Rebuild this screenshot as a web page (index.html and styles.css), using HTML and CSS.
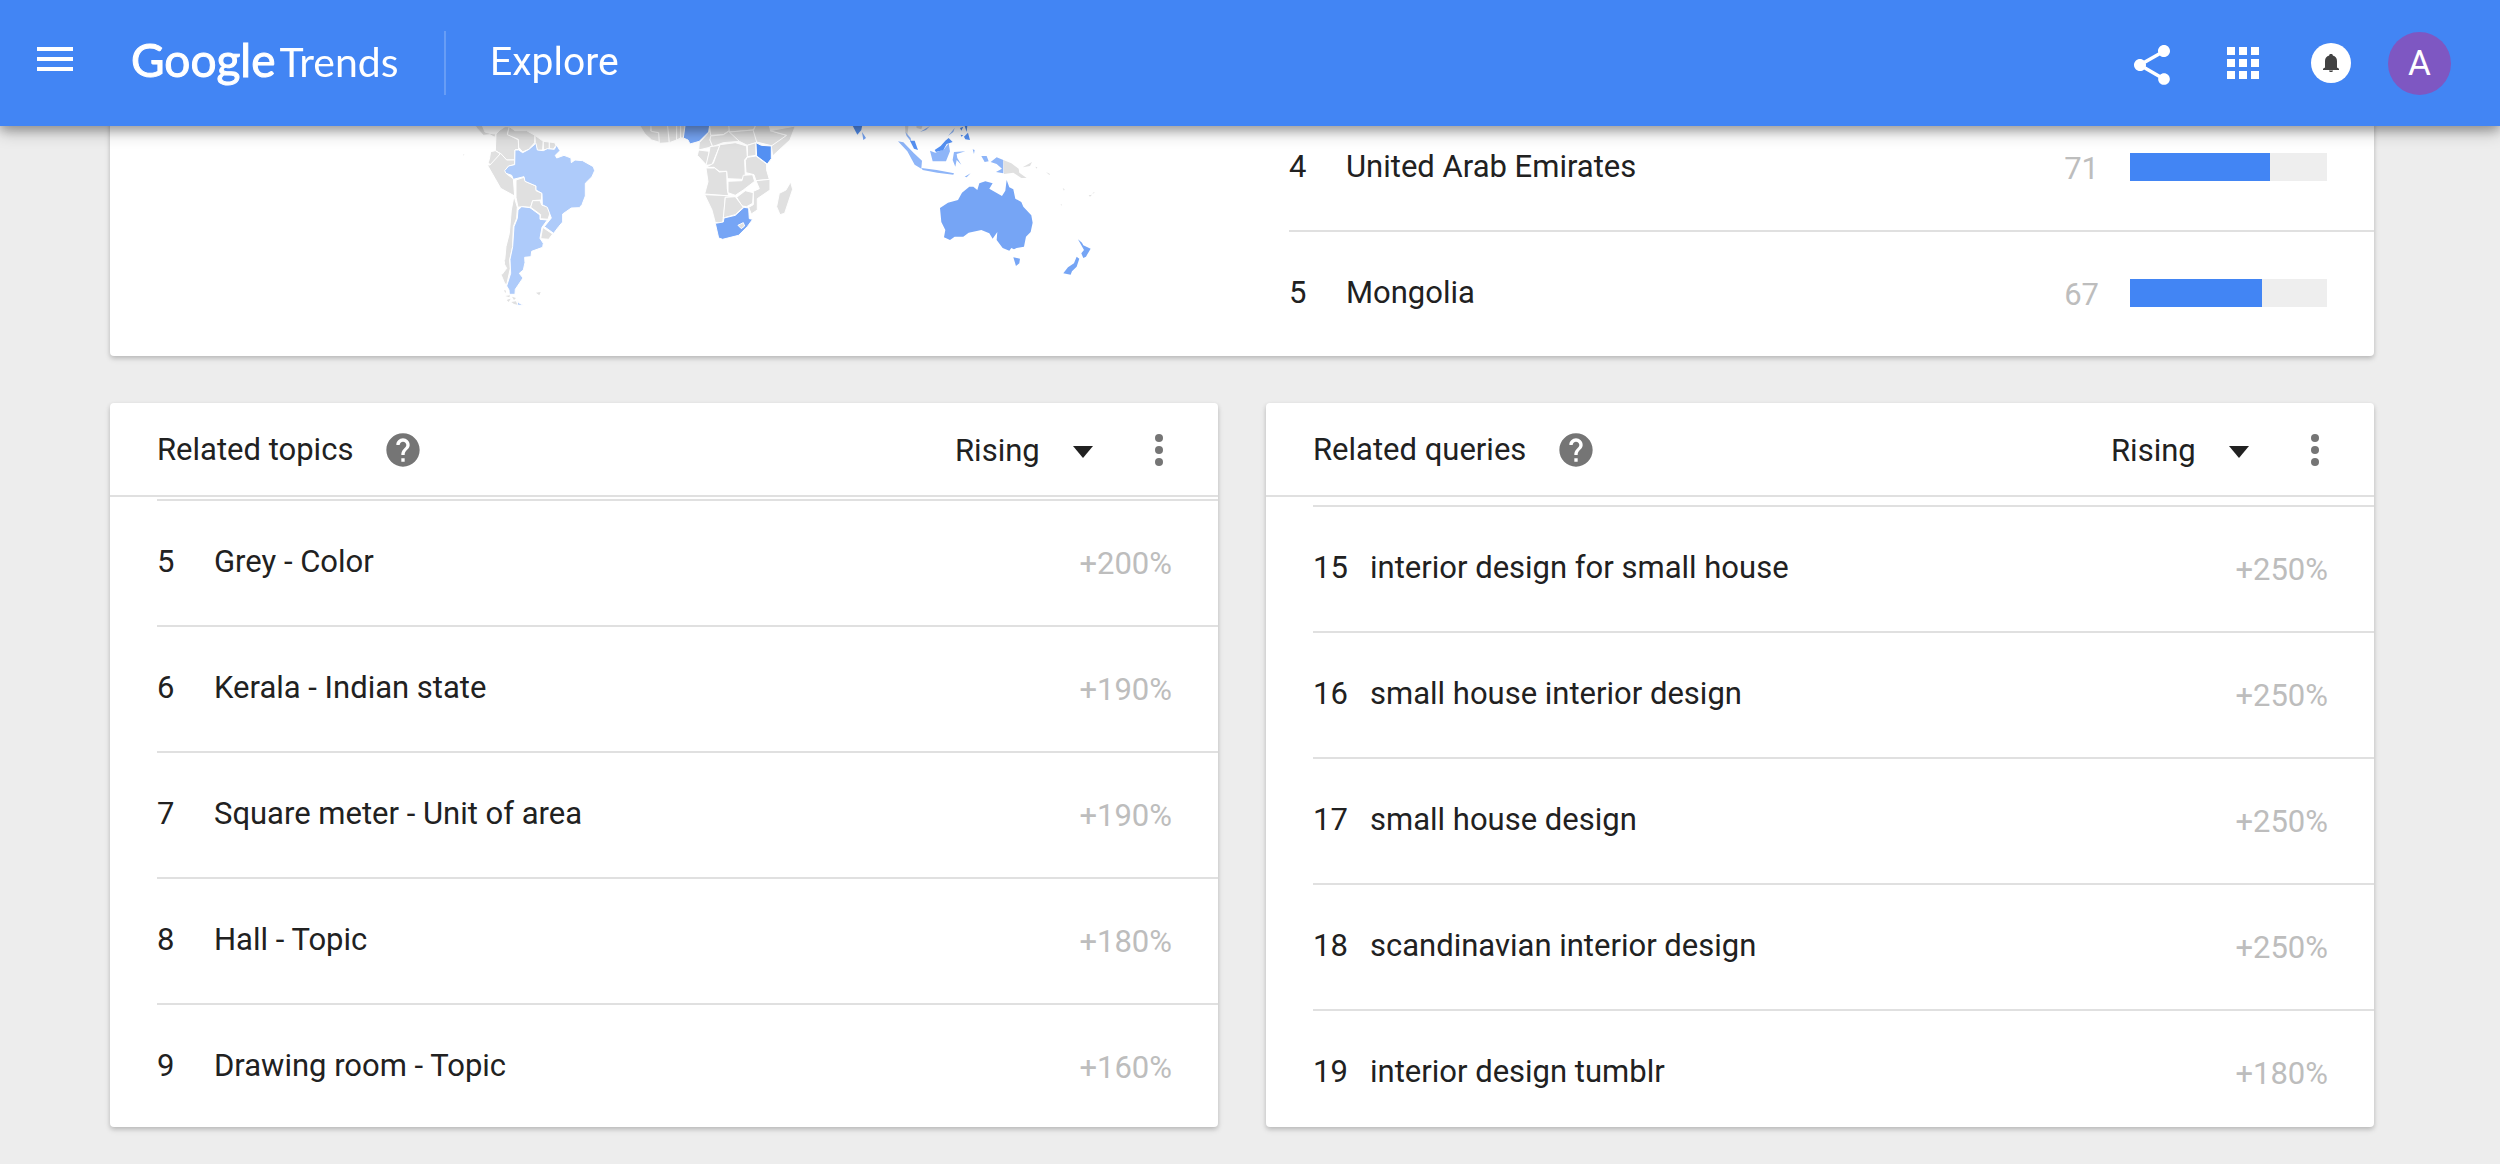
FILE: index.html
```html
<!DOCTYPE html>
<html lang="en">
<head>
<meta charset="utf-8">
<title>Google Trends - Explore</title>
<link rel="stylesheet" href="styles.css">
</head>
<body>
<header class="topbar">
  <button class="icon-button menu-button" aria-label="Main menu"><svg class="icon" viewBox="0 0 24 24"><path d="M3 18h18v-2H3v2zm0-5h18v-2H3v2zm0-7v2h18V6H3z"/></svg></button>
  <a class="logo" href="#"><span class="logo-google">Google</span><span class="logo-trends">Trends</span></a>
  <h1 class="page-name">Explore</h1>
  <nav class="actions">
    <button class="icon-button share-button" aria-label="Share"><svg class="icon" viewBox="0 0 24 24"><path d="M18 16.08c-.76 0-1.44.3-1.96.77L8.91 12.7c.05-.23.09-.46.09-.7s-.04-.47-.09-.7l7.05-4.11c.54.5 1.25.81 2.04.81 1.66 0 3-1.34 3-3s-1.34-3-3-3-3 1.34-3 3c0 .24.04.47.09.7L8.04 9.81C7.5 9.31 6.79 9 6 9c-1.66 0-3 1.34-3 3s1.34 3 3 3c.79 0 1.5-.31 2.04-.81l7.12 4.16c-.05.21-.08.43-.08.65 0 1.61 1.31 2.92 2.92 2.92s2.92-1.31 2.92-2.92-1.31-2.92-2.92-2.92z"/></svg></button>
    <button class="icon-button" aria-label="Google apps"><svg class="icon" viewBox="0 0 24 24"><path d="M4 8h4V4H4v4zm6 12h4v-4h-4v4zm-6 0h4v-4H4v4zm0-6h4v-4H4v4zm6 0h4v-4h-4v4zm6-10v4h4V4h-4zm-6 4h4V4h-4v4zm6 6h4v-4h-4v4zm0 6h4v-4h-4v4z"/></svg></button>
    <button class="icon-button bell-button" aria-label="Notifications"><svg class="bell" viewBox="0 0 24 24"><path d="M12 21c1.100 0 2-.7 2-1.600h-4c0 .9.900 1.600 2 1.600zm6-4.500V10c0-2.900-1.500-5-4.200-5.600V4.300c0-.8-.8-1.300-1.800-1.300s-1.800.5-1.800 1.300v.1C7.500 5 6 7.100 6 10v6.500l-2 1.200V19h16v-1.300z"/></svg></button>
    <button class="avatar" aria-label="Account">A</button>
  </nav>
</header>

<main class="content">
  <section class="card region">
    <svg class="map" viewBox="110 106 1132 250" role="img" aria-label="Interest by region">
      <g class="land" transform="translate(460 110) scale(.3333)">
        <path d="M40 40H64L75 66 90 70 108 72 104 82 90 74 70 76 52 56Z"/>
        <path d="M108 72L120 60 135 50 148 50 142 72 175 90 176 118 165 120 164 150 140 150 120 130 106 122Z"/>
        <path d="M148 50L165 62H200L225 76 224 98 206 118 188 126 176 112 175 88 142 74Z"/>
        <path d="M225 76L250 94 248 120 232 122 226 98Z"/>
        <path d="M250 94L268 96 268 116 250 120Z"/><path d="M268 96L284 98 288 106 280 118 268 116Z"/>
        <path d="M92 125L106 122 122 132 95 165 84 160 88 148Z"/>
        <path d="M82 165L90 165 122 130 140 150H164V164L146 168 136 180 140 192 160 206 164 258 122 235 105 205Z"/>
        <path d="M168 210L192 202 196 214 228 228V242L246 250 244 270 218 272 212 292 185 290 174 292 168 262Z"/>
        <path d="M218 272L240 272 246 286 262 290 270 310 264 328 240 326 242 314 212 292Z"/>
        <path d="M248 352L278 372 266 388 242 386Z"/>
        <path d="M162 258L172 292 170 325 160 350 158 410 149 450 151 475 140 525 134 520 124 496 140 475 133 462 138 410 148 370 154 300Z"/>
        <path class="l1" d="M165 120L176 120 188 128 207 118 228 100 232 120 250 122 262 116 283 118 290 105 300 122 286 136 290 144 312 136 333 144 334 158 345 150 368 152 400 170 404 182 396 200 376 220 376 258 366 284 358 293 334 294 308 312V336L296 350 281 370 253 350 274 324 262 292 247 284 246 250 228 240V228L195 214 192 200 160 208 155 196 138 190 134 182 146 168 164 164Z"/>
        <path class="l1" d="M174 300L185 290 210 293 240 315V328L262 330 246 352 240 385 250 400 248 412 215 424 213 440 194 442 195 458 190 480 178 490 189 504 166 538 165 553H148L147 540 140 528 152 490 150 448 158 410 162 350 172 325Z"/>
        <path class="l1" d="M172 568L176 578 190 586H173Z"/>
        <path class="isle" d="M134 450L140 448 136 466ZM124 494L134 492 136 502ZM132 540L138 542 136 550ZM136 558L150 556 148 562ZM140 570L152 566 146 576ZM156 560L168 564 162 570ZM154 576L168 574 172 584 162 582ZM228 548L242 546 238 556ZM10 132L13 134 11 137Z"/>
        <path d="M535 40H576L572 62 596 66 602 98 575 90 555 72Z"/>
        <path d="M572 40H622L628 68V98L598 100 596 68 574 64Z"/>
        <path d="M622 40H650V90L628 98Z"/><path d="M650 40H662V84L650 90Z"/><path d="M662 40H676L672 84 662 84Z"/>
        <path d="M748 62L756 76 750 90 758 110 716 120 718 98 740 74Z"/>
        <path d="M748 40H806L810 60 790 74 752 76Z"/>
        <path d="M752 78L790 74 810 62 838 94 790 98 758 110 750 90Z"/>
        <path d="M806 40H890L880 60 808 66Z"/>
        <path d="M808 66L880 60 895 96 862 106 838 94Z"/>
        <path d="M890 40H926L932 62 980 76 938 108 890 96 880 62Z"/>
        <path d="M930 62L1006 48 990 90 938 138 934 108 980 76Z"/>
        <path d="M862 106L888 98V136L862 140Z"/>
        <path d="M716 120L748 124 740 166 712 136Z"/><path d="M750 110L780 106 756 164 738 166 748 124Z"/>
        <path d="M780 104L826 98 860 108 862 140 854 150 856 196 846 208 802 206 800 184 778 184 762 172H738L760 160Z"/>
        <path d="M862 142L888 138 920 162V180L928 208 888 212 882 194 858 188 856 152Z"/>
        <path d="M738 174H764L778 186 800 184 802 236 806 258 734 252 744 215Z"/>
        <path d="M804 214L846 212 850 196 878 194 884 214 850 240 826 256 804 248Z"/>
        <path d="M888 212L930 208V240L892 266V300L874 312 866 292 880 284V244L898 236Z"/>
        <path d="M830 262L856 242 880 248 878 280 860 290 846 288Z"/>
        <path d="M734 254L826 258 796 262 792 310 788 338 766 338 756 300Z"/>
        <path d="M796 262L826 260 850 292 826 314 790 324Z"/>
        <path d="M992 216L998 238 974 310 960 314 950 290 958 250 978 240Z"/>
        <path class="l3" d="M676 40H750L746 66 718 94 690 102 684 90 670 84Z"/>
        <path class="l4" d="M888 98L904 106 934 108V146L922 162 890 138Z"/>
        <path class="l3" d="M766 340L790 336 792 324 826 316 852 292 866 294 868 326 878 328 862 350 836 376 788 388 776 384Z"/>
        <path d="M834 346L850 338 854 348 844 356Z"/>
      </g>
      <g class="land coast" transform="translate(820 110) scale(.3333)">
        <path class="l4" d="M94 40H128L124 60 112 74Z"/><path class="l3" d="M126 66L138 84 130 90Z"/>
        <path class="isle" d="M255 40H266L262 80 256 66ZM288 40H310L304 58 290 54Z"/>
        <path class="l2" d="M300 66L330 48 318 60ZM256 66L272 84 274 96 260 78Z"/>
        <path class="l4" d="M270 92L284 92 294 120 282 116Z"/>
        <path class="l2" d="M234 94L250 97 282 130 306 152 304 176 284 164 262 124Z"/>
        <path class="l2" d="M304 174L350 180 402 190 400 194 352 188 308 180Z"/>
        <path class="l2" d="M330 122L346 128 372 118 386 100 390 124 378 154H338Z"/>
        <path class="l4" d="M344 120L362 108 376 92 386 84 398 96 380 102 370 120 348 126Z"/>
        <path class="l2" d="M384 78L404 54 400 66ZM402 126L436 124 410 132 412 144 424 164 410 150 406 170 398 150ZM458 118L464 120 462 132ZM484 138H500L506 154 494 156ZM434 200L452 190 440 202ZM404 196L420 202ZM468 150L476 156Z"/>
        <path class="l4" d="M432 80L444 68 450 90 436 88ZM420 54L430 50 424 62ZM434 48H442L440 66ZM422 74L430 76 424 80Z"/>
        <path class="l2" d="M512 156L530 142 550 150V190L528 186 546 176 530 162Z"/>
        <path d="M550 150L574 160 596 176 598 188 620 204 604 204 580 188 552 192ZM608 172L636 156 630 168Z"/>
        <path class="isle" d="M646 170L652 172 650 176ZM678 186L690 192 688 195ZM728 234L734 238 732 242ZM722 282L726 284 724 287ZM806 256L816 254 810 260ZM816 250L824 246 822 250Z"/>
        <path class="l3" d="M360 294L384 278 414 270 426 248 448 230 460 230 472 240 478 220 496 214 518 220 508 236 546 258 556 242 560 210 568 232 580 238 586 266 604 276 610 290 634 316 638 338 632 366 618 380 612 410 590 414 582 418 574 414 568 422 548 414 530 390 532 366 518 386 508 370 484 360 446 368 430 380H404L390 390 372 382 376 360 364 336Z"/>
        <path class="l3" d="M580 442L600 446 598 460 588 468ZM480 212L494 214ZM774 388L786 398 790 406 812 416 798 440 790 444 784 430 792 420ZM770 440L778 446 770 470 756 484 752 494 730 490 744 472 762 460ZM736 498L742 498Z"/>
      </g>
    </svg>
    <ol class="rows region-rows">
      <li class="row"><span class="rank">4</span><span class="name">United Arab Emirates</span><span class="value">71</span><span class="bar"><span class="fill" style="width:71%"></span></span></li>
      <li class="row"><span class="rank">5</span><span class="name">Mongolia</span><span class="value">67</span><span class="bar"><span class="fill" style="width:67%"></span></span></li>
    </ol>
  </section>

  <div class="pair">
    <section class="card">
      <header class="card-head">
        <h2 class="card-title">Related topics</h2>
        <button class="help" aria-label="Help: related topics"><svg viewBox="0 0 24 24"><path d="M12 2C6.480 2 2 6.480 2 12s4.480 10 10 10 10-4.480 10-10S17.520 2 12 2zm1 17h-2v-2h2v2zm2.070-7.750l-.9.920C13.450 12.900 13 13.500 13 15h-2v-.5c0-1.100.45-2.100 1.170-2.830l1.240-1.260c.37-.36.590-.86.590-1.410 0-1.100-.9-2-2-2s-2 .9-2 2H8c0-2.210 1.790-4 4-4s4 1.790 4 4c0 .88-.36 1.680-.93 2.250z"/></svg></button>
        <div class="picker"><select class="select" aria-label="Sort related topics"><option>Rising</option><option>Top</option></select></div>
        <button class="icon-button more" aria-label="More options"><svg class="icon" viewBox="0 0 24 24"><circle cx="12" cy="6" r="2"/><circle cx="12" cy="12" r="2"/><circle cx="12" cy="18" r="2"/></svg></button>
      </header>
      <div class="scroller">
        <ol class="rows topics">
          <li class="row"><span class="rank">5</span><span class="name">Grey - Color</span><span class="value">+200%</span></li>
          <li class="row"><span class="rank">6</span><span class="name">Kerala - Indian state</span><span class="value">+190%</span></li>
          <li class="row"><span class="rank">7</span><span class="name">Square meter - Unit of area</span><span class="value">+190%</span></li>
          <li class="row"><span class="rank">8</span><span class="name">Hall - Topic</span><span class="value">+180%</span></li>
          <li class="row"><span class="rank">9</span><span class="name">Drawing room - Topic</span><span class="value">+160%</span></li>
        </ol>
      </div>
    </section>
    <section class="card">
      <header class="card-head">
        <h2 class="card-title">Related queries</h2>
        <button class="help" aria-label="Help: related queries"><svg viewBox="0 0 24 24"><path d="M12 2C6.480 2 2 6.480 2 12s4.480 10 10 10 10-4.480 10-10S17.520 2 12 2zm1 17h-2v-2h2v2zm2.070-7.750l-.9.920C13.450 12.900 13 13.500 13 15h-2v-.5c0-1.100.45-2.100 1.170-2.830l1.240-1.260c.37-.36.590-.86.590-1.410 0-1.100-.9-2-2-2s-2 .9-2 2H8c0-2.210 1.790-4 4-4s4 1.790 4 4c0 .88-.36 1.680-.93 2.250z"/></svg></button>
        <div class="picker"><select class="select" aria-label="Sort related queries"><option>Rising</option><option>Top</option></select></div>
        <button class="icon-button more" aria-label="More options"><svg class="icon" viewBox="0 0 24 24"><circle cx="12" cy="6" r="2"/><circle cx="12" cy="12" r="2"/><circle cx="12" cy="18" r="2"/></svg></button>
      </header>
      <div class="scroller">
        <ol class="rows queries">
          <li class="row"><span class="rank">15</span><span class="name">interior design for small house</span><span class="value">+250%</span></li>
          <li class="row"><span class="rank">16</span><span class="name">small house interior design</span><span class="value">+250%</span></li>
          <li class="row"><span class="rank">17</span><span class="name">small house design</span><span class="value">+250%</span></li>
          <li class="row"><span class="rank">18</span><span class="name">scandinavian interior design</span><span class="value">+250%</span></li>
          <li class="row"><span class="rank">19</span><span class="name">interior design tumblr</span><span class="value">+180%</span></li>
        </ol>
      </div>
    </section>
  </div>
</main>
</body>
</html>
```

FILE: styles.css
```css
* { box-sizing: border-box; }

body {
  margin: 0;
  padding-top: 106px;
  background: #ededed;
  color: #212121;
  font: 400 31px/40px Roboto, "Liberation Sans", sans-serif;
}

button, select {
  margin: 0;
  padding: 0;
  border: 0;
  background: none;
  color: inherit;
  font: inherit;
}

/* Fixed top bar: the page scrolls underneath it */
.topbar {
  position: fixed;
  z-index: 2;
  top: 0;
  left: 0;
  right: 0;
  height: 126px;
  padding: 0 49px 0 31px;
  display: flex;
  align-items: center;
  background: #4285f4;
  color: #fff;
  box-shadow: 0 4px 10px rgba(0, 0, 0, .24), 0 6px 16px rgba(0, 0, 0, .24);
}

.icon-button { display: flex; width: 48px; height: 48px; }
.icon { width: 48px; height: 48px; fill: currentColor; }
.menu-button { margin-bottom: 8px; }

.logo {
  display: flex;
  align-items: baseline;
  gap: 4px;
  width: 313px;
  margin-left: 52px;
  padding-bottom: 4px;
  color: #fff;
  font-family: Lato, sans-serif;
  line-height: 64px;
  text-decoration: none;
}
.logo-google { font-size: 46px; -webkit-text-stroke: 1px #fff; }
.logo-trends { font-size: 41px; }

.page-name {
  display: flex;
  align-items: center;
  height: 64px;
  margin: 0;
  padding: 0 0 2px 44px;
  border-left: 2px solid rgba(255, 255, 255, .2);
  font-size: 39px;
  font-weight: 400;
}

.actions { display: flex; align-items: center; margin-left: auto; }
.share-button { margin: 4px 43px 0 0; }
.bell-button {
  width: 40px;
  height: 40px;
  margin: 0 37px 0 44px;
  align-items: center;
  justify-content: center;
  border-radius: 50%;
  background: #fff;
}
.bell { width: 24px; height: 24px; fill: #424242; }
.avatar {
  width: 63px;
  height: 63px;
  border-radius: 50%;
  background: #7e57c2;
  font-size: 35px;
  line-height: 63px;
}

.content { padding: 0 126px 36px 110px; }

.card {
  overflow: hidden;
  border-radius: 4px;
  background: #fff;
  box-shadow: 0 2px 4px rgba(0, 0, 0, .14), 0 3px 6px rgba(0, 0, 0, .1);
}

.region { display: grid; grid-template-columns: 1fr 1fr; }
.map { display: block; width: 100%; }
.land path { fill: #e0e0e0; stroke: #fff; stroke-width: 3; stroke-linejoin: round; }
.coast path { stroke-width: 0; }
.land .isle { stroke: none; }
.land .l1 { fill: #aecbfa; }
.land .l2 { fill: #8eb5f8; }
.land .l3 { fill: #76a5f5; }
.land .l4 { fill: #5490f2; }

.rows { margin: 0; padding: 0 0 0 47px; list-style: none; }
.row {
  display: flex;
  align-items: center;
  height: 126px;
  padding: 0 46px 3px 0;
  border-top: 2px solid #e0e0e0;
}
.rank { width: 57px; }
.name { flex: 1; }
.value { padding-top: 4px; color: #bdbdbd; }

.region-rows .row { height: 124px; border-top: 0; padding-right: 47px; }
.region-rows .row + .row { height: 126px; border-top: 2px solid #e0e0e0; }
.bar { width: 197px; height: 28px; margin-left: 31px; background: #eee; }
.fill { display: block; height: 100%; background: #4285f4; }

.pair {
  display: grid;
  grid-template-columns: 1fr 1fr;
  gap: 48px;
  margin-top: 47px;
}

.card-head {
  display: flex;
  align-items: center;
  height: 94px;
  padding: 2px 35px 0 47px;
  border-bottom: 2px solid #e0e0e0;
}
.card-title { margin: 0; font-size: 31px; font-weight: 400; }
.help { width: 40px; height: 40px; margin-left: 30px; }
.help svg { display: block; width: 40px; height: 40px; fill: #757575; }

.picker { position: relative; margin-left: auto; padding-top: 2px; }
.picker::after {
  content: "";
  position: absolute;
  right: 0;
  top: 50%;
  border: 10px solid transparent;
  border-top: 12px solid #212121;
  border-bottom: 0;
  margin-top: -4px;
  pointer-events: none;
}
.select { display: block; width: 138px; height: 40px; appearance: none; }
.more { margin-left: 42px; color: #757575; }

/* The lists are part-way through their scroll */
.scroller { height: 630px; overflow: hidden; }
.topics { padding-top: 2px; }
.queries { padding-top: 8px; }
```
